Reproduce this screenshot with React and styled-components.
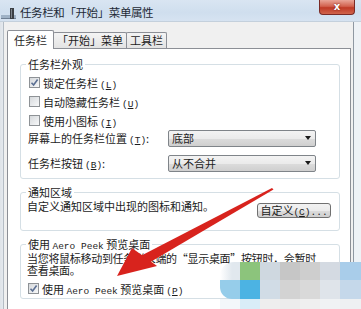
import React from "react";
import styled, { createGlobalStyle, css } from "styled-components";

const Global = createGlobalStyle`
  html, body { margin: 0; padding: 0; }
  body {
    width: 361px; height: 309px; overflow: hidden;
    font-family: "Noto Sans CJK SC", "Noto Sans", sans-serif;
    color: #1c1c1c;
    background: #e9eef4;
  }
`;

const Window = styled.div`
  position: relative;
  width: 361px;
  height: 309px;
  overflow: hidden;
  background: linear-gradient(to right, #dfe3e8 0px, #e4e9ef 3px, #eef2f6 355px);
  display: flex;
  flex-direction: column;
`;

const TitleBar = styled.div`
  height: 22px;
  flex: none;
  display: flex;
  align-items: flex-start;
  background: linear-gradient(to bottom, #d9e5f2, #cfdeee 60%, #d6e3f1);
  border-bottom: 1px solid #c4d0dc;
  box-sizing: border-box;
`;

const AppIcon = styled.svg`
  width: 16px;
  height: 16px;
  margin: 4px 3px 0 1px;
  flex: none;
`;

const Title = styled.div`
  font-size: 11.5px;
  line-height: 14px;
  margin-top: 5px;
  color: #1e2a36;
  letter-spacing: -0.4px;
  flex: 1;
`;

const CloseButton = styled.div`
  width: 36px;
  height: 15px;
  margin-right: 6px;
  box-sizing: border-box;
  border: 1px solid #7a2a25;
  border-top: none;
  border-radius: 0 0 4px 4px;
  background: linear-gradient(to bottom, #e9a597 0%, #d2624f 45%, #bf3a26 55%, #d0644c 100%);
  color: #fff;
  font-family: "DejaVu Sans", sans-serif;
  font-weight: bold;
  font-size: 10px;
  line-height: 13px;
  text-align: center;
  text-shadow: 0 0 2px #6a1a10;
`;

const Body = styled.div`
  flex: 1;
  margin-left: 3px;
  width: 351px;
  box-sizing: border-box;
  background: #f0f0f0;
  border-left: 1px solid #b4bcc4;
  border-right: 1px solid #8f98a2;
  padding: 8px 2px 0 3px;
  display: flex;
  flex-direction: column;
`;

const TabStrip = styled.div`
  display: flex;
  align-items: flex-end;
  height: 18px;
  position: relative;
  z-index: 1;
`;

const Tab = styled.div`
  box-sizing: border-box;
  border: 1px solid #8c8f96;
  font-size: 11px;
  line-height: 14px;
  text-align: center;
  color: #1c1c1c;
  ${(p) =>
    p.$active
      ? css`
          height: 19px;
          margin-bottom: -1px;
          border-bottom: none;
          background: #fff;
          padding: 2px 6px 0;
          border-radius: 2px 2px 0 0;
          position: relative;
          z-index: 2;
        `
      : css`
          height: 16px;
          margin-left: -1px;
          background: linear-gradient(to bottom, #f4f4f4, #e3e3e3);
          padding: 0 ${p.$pad}px;
          border-radius: 2px 2px 0 0;
          border-bottom: none;
        `}
`;

const TabPanel = styled.div`
  flex: 1;
  background: #fff;
  border: 1px solid #8c8f96;
  border-bottom: none;
  padding: 15px 10px 0 12px;
  display: flex;
  flex-direction: column;
`;

const Group = styled.div`
  position: relative;
  border: 1px solid #d5dfe5;
  border-radius: 3px;
  padding: ${(p) => p.$pad};
  display: flex;
  flex-direction: column;
  margin-bottom: ${(p) => p.$gap || 0}px;
`;

const Legend = styled.div`
  position: absolute;
  top: -7px;
  left: 5px;
  padding: 0 2px;
  background: #fff;
  font-size: 11px;
  line-height: 12px;
  white-space: nowrap;
`;

const CheckRow = styled.div`
  height: ${(p) => p.$h || 19}px;
  margin-top: ${(p) => p.$mt || 0}px;
  display: flex;
  align-items: center;
  font-size: 11px;
  white-space: nowrap;
`;

const Box = styled.div`
  width: 11px;
  height: 11px;
  box-sizing: border-box;
  border: 1px solid #8e9296;
  background: linear-gradient(135deg, #d6d9dc, #f7f8f9);
  margin: 0 3px 0 1px;
  display: flex;
  align-items: center;
  justify-content: center;
  flex: none;
`;

const Key = styled.span`
  font-family: "Liberation Mono", monospace;
  font-size: 9.5px;
  margin-left: ${(p) => (p.$tight ? 0 : 2)}px;
  u { text-decoration: underline; }
`;

const Mono = styled.span`
  font-family: "Liberation Mono", monospace;
  font-size: 9.5px;
`;

const SelectRow = styled.div`
  height: 18px;
  display: flex;
  align-items: center;
  font-size: 11px;
  margin-top: ${(p) => p.$mt || 0}px;
  white-space: nowrap;
`;

const SelectLabel = styled.div`
  width: 140px;
  flex: none;
`;

const Select = styled.div`
  width: 148px;
  height: 17px;
  box-sizing: border-box;
  border: 1px solid #7f8489;
  border-radius: 2px;
  background: linear-gradient(to bottom, #f3f3f3 0%, #ebebeb 50%, #dcdcdc 51%, #cfcfcf 100%);
  display: flex;
  align-items: center;
  justify-content: space-between;
  padding: 0 4px 0 3px;
  font-size: 11px;
`;

const Caret = styled.div`
  width: 0;
  height: 0;
  border-left: 3px solid transparent;
  border-right: 3px solid transparent;
  border-top: 4px solid #1a1a1a;
`;

const NoticeRow = styled.div`
  display: flex;
  align-items: flex-start;
  justify-content: space-between;
  font-size: 11px;
  line-height: 12px;
`;

const Button = styled.div`
  width: 74px;
  height: 15px;
  box-sizing: border-box;
  margin-top: 3px;
  border: 1px solid #707070;
  border-radius: 3px;
  background: linear-gradient(to bottom, #f2f2f2 0%, #ebebeb 50%, #dddddd 51%, #cfcfcf 100%);
  font-size: 11px;
  line-height: 13px;
  text-align: center;
  white-space: nowrap;
`;

const Para = styled.div`
  font-size: 11px;
  line-height: 12px;
  white-space: nowrap;
  letter-spacing: -0.3px;
`;

const Overlay = styled.svg`
  position: absolute;
  left: 0;
  top: 0;
  pointer-events: none;
`;

const Mosaic = styled.div`
  position: absolute;
  left: 220px;
  top: 262px;
  display: grid;
  grid-template-columns: 20px 20px 20px 20px 20px 20px 21px;
  grid-template-rows: 18px 19px 10px;
`;

const Cell = styled.div`
  background: ${(p) => p.$c};
  border-radius: ${(p) => p.$r || 0};
`;

const mosaic = [
  ["linear-gradient(to right, rgba(255,255,255,0), #e1e8ee 60%)", "#8cc47c", "#cfd8e0", "#c6c6c6", "#cecece", "#d4dae2", "#a9cdea"],
  ["#96cdea", "#4cb3e3", "#d1dce6", "#d3d3d3", "#d9d9d9", "#dfe4ea", "#c5d8ea"],
  ["#f3f7fa", "#d9edf8", "#eeeeee", "#ececec", "#efefef", "#f0f2f4", "#eef0f2"],
];

function Check({ checked }) {
  return (
    <Box>
      {checked && (
        <svg width="9" height="9" viewBox="0 0 9 9">
          <path d="M1.5 4.8 L3.6 7 L7.6 1.6" fill="none" stroke="#5b6f93" strokeWidth="1.6" />
        </svg>
      )}
    </Box>
  );
}

function Mn({ k }) {
  return (
    <Key>
      (<u>{k}</u>)
    </Key>
  );
}

export default function App() {
  return (
    <>
      <Global />
      <Window>
        <TitleBar>
          <AppIcon viewBox="0 0 16 16">
            <rect x="0" y="11" width="15" height="4" fill="#9fb2c6" />
            <rect x="0" y="14" width="15" height="1" fill="#6f8094" />
            <rect x="9" y="4" width="4" height="11" fill="#3c3f44" />
            <rect x="10" y="5" width="1" height="9" fill="#7d848c" />
          </AppIcon>
          <Title>任务栏和「开始」菜单属性</Title>
          <CloseButton>x</CloseButton>
        </TitleBar>
        <Body>
          <TabStrip>
            <Tab $active>任务栏</Tab>
            <Tab $pad={3}>「开始」菜单</Tab>
            <Tab $pad={3}>工具栏</Tab>
          </TabStrip>
          <TabPanel>
            <Group $pad="8px 7px 6px 7px" $gap={13}>
              <Legend>任务栏外观</Legend>
              <CheckRow>
                <Check checked />
                <span>锁定任务栏<Mn k="L" /></span>
              </CheckRow>
              <CheckRow>
                <Check />
                <span>自动隐藏任务栏<Mn k="U" /></span>
              </CheckRow>
              <CheckRow>
                <Check />
                <span>使用小图标<Mn k="I" /></span>
              </CheckRow>
              <SelectRow $mt={-1}>
                <SelectLabel>
                  屏幕上的任务栏位置<Mn k="T" />:
                </SelectLabel>
                <Select>
                  底部
                  <Caret />
                </Select>
              </SelectRow>
              <SelectRow $mt={7}>
                <SelectLabel>
                  任务栏按钮<Mn k="B" />:
                </SelectLabel>
                <Select>
                  从不合并
                  <Caret />
                </Select>
              </SelectRow>
            </Group>
            <Group $pad="7px 8px 12px 6px" $gap={13}>
              <Legend>通知区域</Legend>
              <NoticeRow>
                <span>自定义通知区域中出现的图标和通知。</span>
                <Button>
                  自定义<Key $tight>(<u>C</u>)...</Key>
                </Button>
              </NoticeRow>
            </Group>
            <Group $pad="7px 7px 1px 6px">
              <Legend>
                使用 <Mono>Aero Peek</Mono> 预览桌面
              </Legend>
              <Para>
                当您将鼠标移动到任务栏末端的“显示桌面”按钮时，会暂时
                <br />
                查看桌面。
              </Para>
              <CheckRow $h={17} $mt={4}>
                <Check checked />
                <span>
                  使用 <Mono>Aero Peek</Mono> 预览桌面<Mn k="P" />
                </span>
              </CheckRow>
            </Group>
          </TabPanel>
        </Body>
        <Mosaic>
          {mosaic.map((row, r) =>
            row.map((c, i) => (
              <Cell
                key={r + "-" + i}
                $c={c}
                $r={i === 0 && r === 0 ? "14px 0 0 0" : i === 0 && r === 1 ? "0 0 0 12px" : 0}
              />
            ))
          )}
        </Mosaic>
        <Overlay width="361" height="309" viewBox="0 0 361 309">
          <polygon points="272,188 273.5,189.5 147,264 140.5,256" fill="#d8231d" />
          <polygon points="117,276 132,248 157,266" fill="#d8231d" />
        </Overlay>
      </Window>
    </>
  );
}
